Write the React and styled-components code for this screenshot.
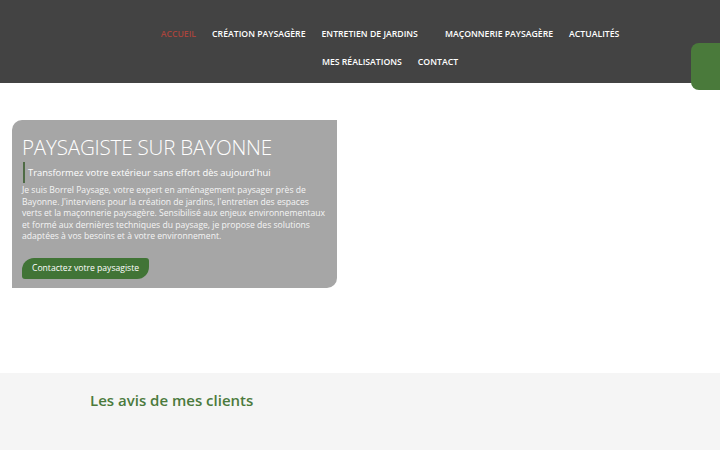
import React from 'react'
import styled, { createGlobalStyle } from 'styled-components'

const GlobalStyle = createGlobalStyle`
	* {
		box-sizing: border-box;
	}

	body {
		margin: 0;
		font-family: 'Open Sans', 'Liberation Sans', sans-serif;
		background: #ffffff;
	}
`

const links = [
	{ label: 'Accueil', active: true },
	{ label: 'Création paysagère' },
	{ label: 'Entretien de jardins', dropdown: true },
	{ label: 'Maçonnerie paysagère' },
	{ label: 'Actualités' },
	{ label: 'Mes réalisations' },
	{ label: 'Contact' },
]

const App = () => {
	return (
		<Page>
			<GlobalStyle />

			<Header>
				<Nav>
					{links.map((link) => (
						<NavLink key={link.label} $active={link.active} $dropdown={link.dropdown}>
							{link.label}
						</NavLink>
					))}
				</Nav>
			</Header>

			<SideTab />

			<Hero>
				<Card>
					<Title>Paysagiste sur Bayonne</Title>

					<Subtitle>Transformez votre extérieur sans effort dès aujourd'hui</Subtitle>

					<Text>
						Je suis Borrel Paysage, votre expert en aménagement paysager près de Bayonne. J'interviens
						pour la création de jardins, l'entretien des espaces verts et la maçonnerie paysagère.
						Sensibilisé aux enjeux environnementaux et formé aux dernières techniques du paysage, je
						propose des solutions adaptées à vos besoins et à votre environnement.
					</Text>

					<CtaButton>Contactez votre paysagiste</CtaButton>
				</Card>
			</Hero>

			<Reviews>
				<ReviewsTitle>Les avis de mes clients</ReviewsTitle>
			</Reviews>
		</Page>
	)
}

export default App

const Page = styled.div`
	position: relative;
	width: 720px;
	height: 450px;
	overflow: hidden;
`

const Header = styled.header`
	height: 83px;
	background: #434343;
	padding-top: 27px;
`

const Nav = styled.nav`
	width: 480px;
	margin-left: 150px;
	display: flex;
	flex-wrap: wrap;
	justify-content: center;
	column-gap: 16px;
	row-gap: 13px;
`

const NavLink = styled.a`
	font-family: 'Open Sans', 'Liberation Sans', sans-serif;
	font-size: 8.7px;
	font-weight: 600;
	line-height: 15px;
	text-transform: uppercase;
	color: ${(p) => (p.$active ? '#a8443c' : '#ffffff')};
	padding-right: ${(p) => (p.$dropdown ? '11px' : '0')};
	white-space: nowrap;
`

const SideTab = styled.div`
	position: absolute;
	top: 43px;
	right: -10px;
	width: 39px;
	height: 47px;
	background: #4a7a3b;
	border-radius: 8px;
`

const Hero = styled.section`
	height: 290px;
	padding: 37px 0 0 12px;
`

const Card = styled.div`
	width: 325px;
	height: 168px;
	background: #a6a6a6;
	border-radius: 10px 0 10px 0;
	padding: 13px 10px 0 10px;
	color: #ffffff;
`

const Title = styled.h1`
	margin: 0;
	font-family: 'Open Sans', 'Liberation Sans', sans-serif;
	font-size: 20.6px;
	font-weight: 300;
	line-height: 28px;
	text-transform: uppercase;
	letter-spacing: -0.2px;
`

const Subtitle = styled.p`
	margin: 1px 0 0 1px;
	padding-left: 3px;
	border-left: 2px solid #4e6b45;
	font-size: 9.4px;
	line-height: 21px;
`

const Text = styled.p`
	margin: 2px 0 0;
	font-size: 8.6px;
	line-height: 11.5px;
	color: #f5f5f5;
`

const CtaButton = styled.button`
	margin-top: 15px;
	height: 21px;
	padding: 0 10px;
	border: none;
	background: #417436;
	color: #ffffff;
	font-family: 'Open Sans', 'Liberation Sans', sans-serif;
	font-size: 8.6px;
	border-radius: 12px 3px 12px 3px;
`

const Reviews = styled.section`
	height: 77px;
	background: #f5f5f5;
	padding: 17px 0 0 90px;
`

const ReviewsTitle = styled.h2`
	margin: 0;
	font-family: 'Open Sans', 'Liberation Sans', sans-serif;
	font-size: 15px;
	font-weight: 600;
	color: #4b7a3c;
`
